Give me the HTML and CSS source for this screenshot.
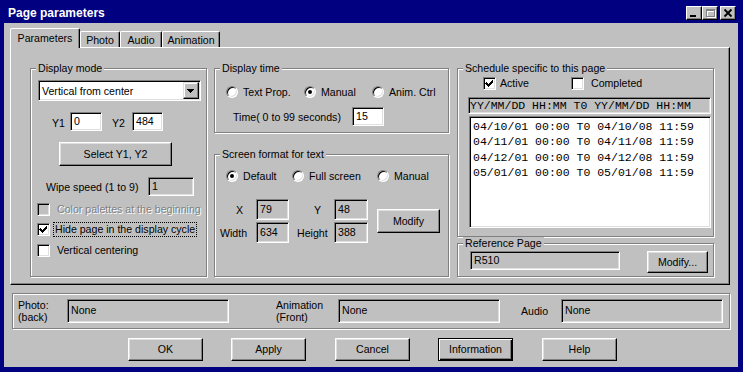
FILE: index.html
```html
<!DOCTYPE html>
<html lang="en">
<head>
  <meta charset="UTF-8">
  <title>Page parameters</title>
  <link rel="stylesheet" href="styles.css">
</head>
<body>
<div class="window">

  <div class="titlebar">
    <span class="title">Page parameters</span>
    <div class="caption-btns">
      <span class="cap-btn">
        <svg width="14" height="12" viewBox="0 0 14 12" shape-rendering="crispEdges"><rect x="3" y="8" width="6" height="2" fill="#000"/></svg>
      </span>
      <span class="cap-btn">
        <svg width="14" height="12" viewBox="0 0 14 12" shape-rendering="crispEdges">
          <path d="M3 2h9v8h-9z M4 4h7v5h-7z" fill="#fff" fill-rule="evenodd" transform="translate(1 1)"/>
          <path d="M3 2h9v8h-9z M4 4h7v5h-7z" fill="#808080" fill-rule="evenodd"/>
        </svg>
      </span>
      <span class="cap-btn close">
        <svg width="14" height="12" viewBox="0 0 14 12"><path d="M3.5 2.5l7 7M10.5 2.5l-7 7" stroke="#000" stroke-width="1.8"/></svg>
      </span>
    </div>
  </div>

  <div class="client">

    <div class="tabs">
      <div class="tab active">Parameters</div>
      <div class="tab t-photo">Photo</div>
      <div class="tab t-audio">Audio</div>
      <div class="tab t-anim">Animation</div>
    </div>

    <div class="tab-panel">

      <!-- left column -->
      <div class="group g-mode">
        <div class="group-title">Display mode</div>
        <div class="combo">
          <span class="combo-text">Vertical from center</span>
          <span class="combo-btn">
            <svg width="14" height="15" viewBox="0 0 14 15" shape-rendering="crispEdges"><path d="M3 6h7v1h-1v1h-1v1h-1v1h-1v-1h-1v-1h-1v-1h-1z" fill="#000"/></svg>
          </span>
        </div>
        <div class="row y-row">
          <span class="lbl l-y1">Y1</span><span class="field f-y1">0</span>
          <span class="lbl l-y2">Y2</span><span class="field f-y2">484</span>
        </div>
        <div class="btn b-select">Select Y1, Y2</div>
        <div class="row wipe-row">
          <span class="lbl l-wipe">Wipe speed (1 to 9)</span><span class="field ro f-wipe">1</span>
        </div>
        <div class="check-row first disabled">
          <span class="check"></span><span class="check-text">Color palettes at the beginning</span>
        </div>
        <div class="check-row">
          <span class="check">
            <svg width="11" height="11" viewBox="0 0 11 11" shape-rendering="crispEdges"><path d="M2 4h1v1h1v1h1v-1h1v-1h1v-1h1v-1h1v3h-1v1h-1v1h-1v1h-1v1h-1v-1h-1v-1h-1v-1h-1z" fill="#000"/></svg>
          </span><span class="check-text focus">Hide page in the display cycle</span>
        </div>
        <div class="check-row last">
          <span class="check"></span><span class="check-text">Vertical centering</span>
        </div>
      </div>

      <!-- middle column -->
      <div class="col-mid">
        <div class="group g-time">
          <div class="group-title">Display time</div>
          <div class="radio-row">
            <span class="radio-item ri-text"><span class="radio"></span>Text Prop.</span>
            <span class="radio-item ri-manual"><span class="radio on"></span>Manual</span>
            <span class="radio-item"><span class="radio"></span>Anim. Ctrl</span>
          </div>
          <div class="row time-row">
            <span class="lbl l-time">Time( 0 to 99 seconds)</span><span class="field f-time">15</span>
          </div>
        </div>

        <div class="group g-screen">
          <div class="group-title">Screen format for text</div>
          <div class="radio-row">
            <span class="radio-item ri-default"><span class="radio on"></span>Default</span>
            <span class="radio-item ri-full"><span class="radio"></span>Full screen</span>
            <span class="radio-item"><span class="radio"></span>Manual</span>
          </div>
          <div class="xy-area">
            <div class="xy-grid">
              <span class="lbl l-x">X</span><span class="field ro">79</span>
              <span class="lbl l-yy">Y</span><span class="field ro">48</span>
              <span class="lbl l-w">Width</span><span class="field ro">634</span>
              <span class="lbl l-h">Height</span><span class="field ro">388</span>
            </div>
            <div class="btn b-modify">Modify</div>
          </div>
        </div>
      </div>

      <!-- right column -->
      <div class="col-right">
        <div class="group g-sched">
          <div class="group-title">Schedule specific to this page</div>
          <div class="sched-checks">
            <span class="check">
              <svg width="11" height="11" viewBox="0 0 11 11" shape-rendering="crispEdges"><path d="M2 4h1v1h1v1h1v-1h1v-1h1v-1h1v-1h1v3h-1v1h-1v1h-1v1h-1v1h-1v-1h-1v-1h-1v-1h-1z" fill="#000"/></svg>
            </span><span class="sc-text sc-active">Active</span>
            <span class="check"></span><span class="sc-text sc-done">Completed</span>
          </div>
          <div class="sched-head">YY/MM/DD HH:MM T0 YY/MM/DD HH:MM</div>
          <div class="sched-list">
            <div>04/10/01 00:00 T0 04/10/08 11:59</div>
            <div>04/11/01 00:00 T0 04/11/08 11:59</div>
            <div>04/12/01 00:00 T0 04/12/08 11:59</div>
            <div>05/01/01 00:00 T0 05/01/08 11:59</div>
          </div>
        </div>

        <div class="group g-ref">
          <div class="group-title">Reference Page</div>
          <div class="row ref-row">
            <span class="field ro f-ref">R510</span>
            <div class="btn b-ref">Modify...</div>
          </div>
        </div>
      </div>

    </div>

    <div class="group g-media">
      <span class="lbl two l-photo">Photo:<br>(back)</span>
      <span class="field ro f-media">None</span>
      <span class="lbl two l-anim">Animation<br>(Front)</span>
      <span class="field ro f-media">None</span>
      <span class="lbl l-audio">Audio</span>
      <span class="field ro f-media">None</span>
    </div>

    <div class="buttons">
      <div class="btn b-main">OK</div>
      <div class="btn b-main">Apply</div>
      <div class="btn b-main wide-gap">Cancel</div>
      <div class="btn b-main default">Information</div>
      <div class="btn b-main wide-gap">Help</div>
    </div>

  </div>
</div>
</body>
</html>
```

FILE: styles.css
```css
* {
  box-sizing: border-box;
}
body {
  margin: 0;
  background: #000080;
  font-family: 'Liberation Sans', Arial, sans-serif;
  font-size: 10.6px;
  color: #000;
}

.window {
  width: 743px;
  height: 372px;
  background: #000080;
  padding: 0 5px 5px 4px;
  display: flex;
  flex-direction: column;
}

/* title bar */
.titlebar {
  height: 23px;
  display: flex;
  align-items: flex-start;
  padding: 6px 2px 0 4px;
}
.title {
  flex: 1;
  color: #fff;
  font-weight: bold;
  font-size: 12px;
  line-height: 14px;
}
.caption-btns {
  display: flex;
}
.cap-btn {
  width: 16px;
  height: 14px;
  background: #c0c0c0;
  border: 1px solid;
  border-color: #fff #000 #000 #fff;
  box-shadow: inset -1px -1px #808080;
}
.cap-btn svg {
  display: block;
}
.cap-btn.close {
  margin-left: 2px;
}

.client {
  flex: 1;
  background: #c0c0c0;
  padding: 5px 8px 0 6px;
}

/* tabs */
.tabs {
  display: flex;
  align-items: flex-end;
  height: 19px;
}
.tab {
  height: 16px;
  padding-top: 1px;
  line-height: 14px;
  text-align: center;
  background: #c0c0c0;
  border-top: 1px solid #fff;
  border-left: 1px solid #fff;
  border-right: 1px solid #000;
  border-radius: 2px 2px 0 0;
  box-shadow: inset -1px 0 #808080;
}
.tab.active {
  width: 70px;
  height: 20px;
  padding-top: 2px;
  margin-bottom: -1px;
  position: relative;
  z-index: 1;
}
.t-photo { width: 40px; }
.t-audio { width: 42px; }
.t-anim { width: 58px; }

.tab-panel {
  height: 238px;
  border: 1px solid;
  border-color: #fff #000 #000 #fff;
  box-shadow: inset -1px -1px #808080;
  padding: 20px 0 0 19px;
  display: flex;
  align-items: flex-start;
}

/* group boxes */
.group {
  border: 1px solid #808080;
  box-shadow: inset 1px 1px #fff, 1px 1px #fff;
}
.group-title {
  width: max-content;
  margin: -7px 0 0 5px;
  padding: 0 2px;
  line-height: 13px;
  background: #c0c0c0;
}

.row {
  display: flex;
  align-items: center;
}
.lbl {
  display: block;
  white-space: nowrap;
}

/* sunken fields */
.field {
  display: block;
  height: 19px;
  line-height: 17px;
  padding-left: 3px;
  background: #fff;
  border: 1px solid;
  border-color: #808080 #fff #fff #808080;
  box-shadow: inset 1px 1px #000, inset -1px -1px #dfdfdf;
  white-space: nowrap;
}
.field.ro {
  background: #c0c0c0;
}

/* raised buttons */
.btn {
  background: #c0c0c0;
  border: 1px solid;
  border-color: #fff #000 #000 #fff;
  box-shadow: inset -1px -1px #808080, inset 1px 1px #dfdfdf;
  text-align: center;
}
.btn.default {
  border-color: #000;
  box-shadow: inset 1px 1px #fff, inset -1px -1px #000, inset -2px -2px #808080;
}

/* check boxes and radios */
.check {
  width: 13px;
  height: 13px;
  flex: none;
  background: #fff;
  border: 1px solid;
  border-color: #808080 #fff #fff #808080;
  box-shadow: inset 1px 1px #000, inset -1px -1px #dfdfdf;
}
.check svg {
  display: block;
}
.radio {
  width: 12px;
  height: 12px;
  flex: none;
  margin-right: 5px;
  border-radius: 50%;
  background: #fff;
  border: 1px solid;
  border-color: #808080 #fff #fff #808080;
  box-shadow: inset 1px 1px #000, inset -1px -1px #dfdfdf;
}
.radio.on::after {
  content: '';
  display: block;
  width: 4px;
  height: 4px;
  margin: 3px;
  border-radius: 50%;
  background: #000;
}

/* display mode */
.g-mode {
  width: 177px;
  height: 209px;
}
.combo {
  width: 163px;
  height: 21px;
  margin: 5px 0 0 7px;
  padding: 0 0 0 3px;
  display: flex;
  align-items: center;
  background: #fff;
  border: 1px solid;
  border-color: #808080 #fff #fff #808080;
  box-shadow: inset 1px 1px #000, inset -1px -1px #dfdfdf;
}
.combo-text {
  flex: 1;
}
.combo-btn {
  width: 16px;
  height: 17px;
  margin-right: 1px;
  background: #c0c0c0;
  border: 1px solid;
  border-color: #dfdfdf #000 #000 #dfdfdf;
  box-shadow: inset -1px -1px #808080, inset 1px 1px #fff;
}
.combo-btn svg {
  display: block;
}
.y-row {
  margin-top: 11px;
}
.l-y1 { width: 18px; margin-left: 21px; padding-top: 3px; }
.f-y1 { width: 32px; }
.l-y2 { width: 20px; margin-left: 10px; padding-top: 3px; }
.f-y2 { width: 31px; }
.b-select {
  width: 113px;
  height: 24px;
  line-height: 22px;
  margin: 11px 0 0 28px;
}
.wipe-row {
  margin: 11px 0 0 15px;
}
.l-wipe { width: 102px; }
.f-wipe { width: 46px; }

.check-row {
  display: flex;
  align-items: center;
  height: 13px;
  margin: 7px 0 0 6px;
}
.check-row.first { margin-top: 7px; }
.check-row.last { margin-top: 8px; }
.check-text {
  margin-left: 6px;
  padding: 0 1px;
  line-height: 13px;
  white-space: nowrap;
}
.check-text.focus {
  margin-left: 4px;
  outline: 1px dotted #000;
}
.check-row.disabled .check {
  background: #c0c0c0;
}
.check-row.disabled .check-text {
  color: #808080;
  text-shadow: 1px 1px #fff;
}

/* display time / screen format */
.col-mid {
  width: 235px;
  margin-left: 7px;
}
.g-time {
  height: 65px;
}
.g-screen {
  height: 123px;
  margin-top: 21px;
}
.radio-row {
  display: flex;
  height: 12px;
  margin: 11px 0 0 11px;
}
.g-screen .radio-row {
  margin-top: 9px;
}
.radio-item {
  display: flex;
  align-items: center;
  white-space: nowrap;
}
.ri-text { width: 78px; }
.ri-manual { width: 68px; }
.ri-default { width: 66px; }
.ri-full { width: 85px; }
.time-row {
  margin: 9px 0 0 18px;
}
.l-time { width: 119px; }
.f-time { width: 32px; }

.xy-area {
  display: flex;
  align-items: center;
  margin-top: 17px;
}
.xy-grid {
  display: grid;
  grid-template-columns: 41px 33px 45px 34px;
  grid-template-rows: 21px 21px;
  row-gap: 2px;
  align-items: center;
}
.xy-grid .field {
  height: 21px;
  line-height: 19px;
}
.l-x { margin-left: 21px; }
.l-w { margin-left: 5px; }
.l-yy { margin-left: 25px; }
.l-h { margin-left: 8px; }
.b-modify {
  width: 63px;
  height: 24px;
  line-height: 22px;
  margin-left: 9px;
}

/* schedule */
.col-right {
  width: 257px;
  margin-left: 8px;
}
.g-sched {
  height: 169px;
}
.sched-checks {
  display: flex;
  align-items: center;
  height: 13px;
  margin: 2px 0 0 25px;
}
.sc-text {
  line-height: 13px;
}
.sc-active {
  width: 71px;
  margin-left: 4px;
}
.sc-done {
  margin-left: 7px;
}
.sched-head,
.sched-list {
  font-family: 'Liberation Mono', 'Courier New', monospace;
  font-size: 11.5px;
  white-space: nowrap;
  border: 1px solid;
  border-color: #808080 #fff #fff #808080;
  box-shadow: inset 1px 1px #000, inset -1px -1px #dfdfdf;
}
.sched-head {
  width: 243px;
  height: 17px;
  margin: 7px 0 0 10px;
  padding-left: 1px;
  line-height: 15px;
  background: #c0c0c0;
}
.sched-list {
  width: 242px;
  height: 112px;
  margin: 2px 0 0 11px;
  padding: 2px 0 0 3px;
  line-height: 15.3px;
  background: #fff;
}

.g-ref {
  height: 34px;
  margin-top: 6px;
}
.ref-row {
  align-items: flex-start;
  margin: 1px 0 0 12px;
}
.f-ref { width: 150px; }
.b-ref {
  width: 61px;
  height: 22px;
  line-height: 20px;
  margin-left: 27px;
}

/* media row */
.g-media {
  width: 718px;
  height: 36px;
  margin: 8px 0 0 2px;
  display: flex;
  align-items: center;
}
.lbl.two {
  line-height: 12px;
}
.l-photo { width: 49px; margin-left: 5px; }
.l-anim { width: 62px; margin-left: 47px; }
.l-audio { width: 40px; margin-left: 21px; }
.f-media {
  width: 162px;
  height: 24px;
  line-height: 20px;
}

/* dialog buttons */
.buttons {
  display: flex;
  gap: 28px;
  margin-top: 9px;
  padding-left: 118px;
}
.b-main {
  width: 75px;
  height: 23px;
  line-height: 21px;
}
.b-main.wide-gap {
  margin-left: 1px;
}
```
